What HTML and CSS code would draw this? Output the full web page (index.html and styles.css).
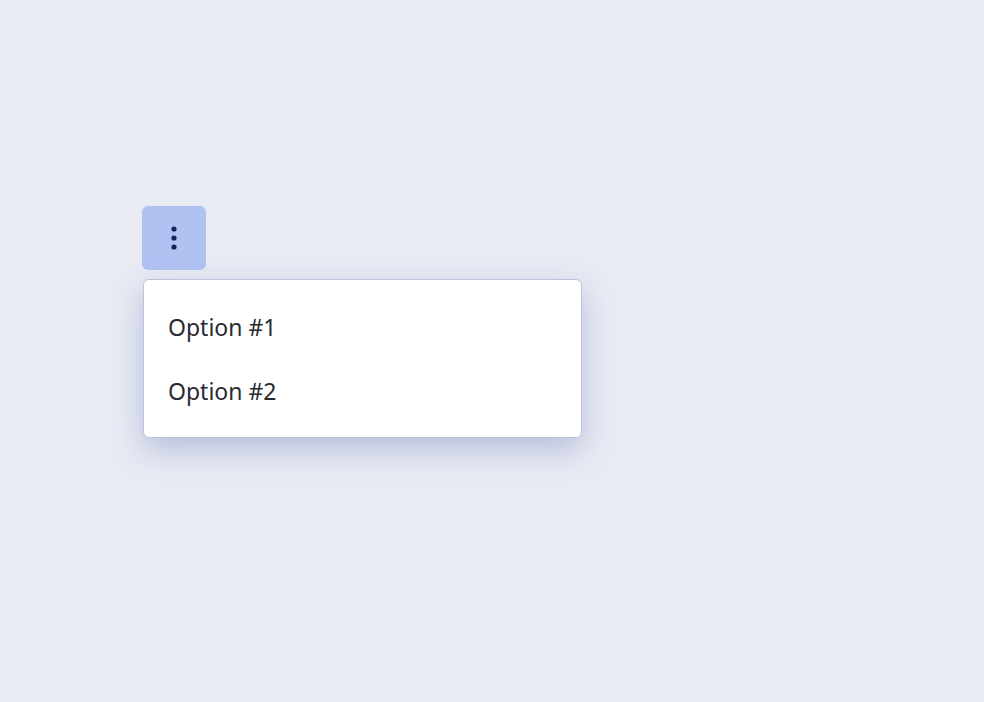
FILE: index.html
```html
<!doctype html>
<html lang="en">
 <head>
	<meta charset="UTF-8">
	<title>Menu</title>
	<link rel="stylesheet" href="styles.css">
 </head>
	<body>
		<div class="wrap">
			<button class="trigger" type="button">
				<svg width="6" height="24" viewBox="0 0 6 24">
					<circle cx="3" cy="3" r="2.6" fill="#15235a"/>
					<circle cx="3" cy="12" r="2.6" fill="#15235a"/>
					<circle cx="3" cy="21" r="2.6" fill="#15235a"/>
				</svg>
			</button>
			<ul class="menu">
				<li>Option #1</li>
				<li>Option #2</li>
			</ul>
		</div>
	</body>
</html>
```

FILE: styles.css
```css
*{
	padding:0;
	margin:0;
	box-sizing:border-box;
}
body{
	background:#e8ebf4;
	font-family:'Noto Sans','Open Sans',sans-serif;
	height:702px;
}
.wrap{
	padding:206px 0 0 142px;
}
.trigger{
	width:64px;
	height:64px;
	border:none;
	border-radius:6px;
	background:#b0c2f2;
	display:flex;
	align-items:center;
	justify-content:center;
}
.trigger svg{
	display:block;
}
.menu{
	margin:9px 0 0 1px;
	width:439px;
	background:#fff;
	border:1px solid #bcc3da;
	border-radius:6px;
	padding:15px 0 14px;
	list-style:none;
	box-shadow:0 12px 30px rgba(112,126,180,.4);
}
.menu li{
	height:64px;
	line-height:64px;
	padding:0 24px;
	font-size:23px;
	color:#2a2b30;
}
```
